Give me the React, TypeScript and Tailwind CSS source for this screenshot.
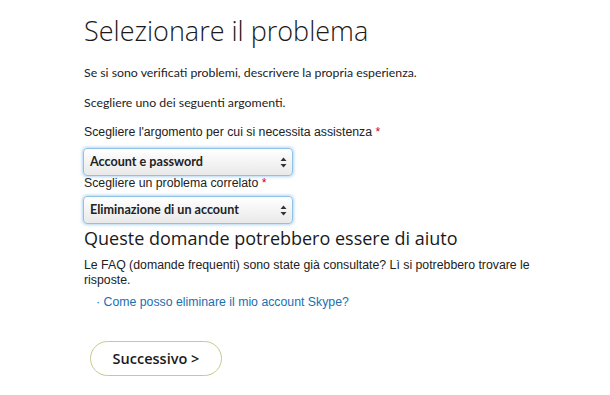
const segoe = "font-['Open_Sans',sans-serif]";
const lato = "font-['Lato',sans-serif]";
const arial = "font-['Liberation_Sans',Arial,sans-serif]";

function FakeSelect({ value }: { value: string }) {
  return (
    <div className="h-[28px] w-[210px] rounded-[4px] border border-[#8fc3e6] bg-gradient-to-b from-white to-[#e9e9e9] shadow-[0_0_3px_1px_rgba(120,180,230,0.55)] flex items-center justify-between pl-[6px] pr-[5px]">
      <span className={`${lato} text-[12.6px] font-bold text-[#222]`}>{value}</span>
      <svg width="7" height="11" viewBox="0 0 7 11">
        <path d="M3.5 0.5 L6.5 4 L0.5 4 Z" fill="#333" />
        <path d="M3.5 10.5 L6.5 7 L0.5 7 Z" fill="#333" />
      </svg>
    </div>
  );
}

export default function App() {
  return (
    <div className="w-[610px] h-[395px] bg-white overflow-hidden">
      <div className="pl-[84px] pt-[14px]">
        <h1 className={`${segoe} font-light text-[27px] leading-[34px] text-[#1a1a1a]`}>
          Selezionare il problema
        </h1>
        <p className={`${lato} text-[12.3px] leading-[16px] text-[#222] mt-[17px]`}>
          Se si sono verificati problemi, descrivere la propria esperienza.
        </p>
        <p className={`${lato} text-[12.3px] leading-[16px] text-[#222] mt-[14px]`}>
          Scegliere uno dei seguenti argomenti.
        </p>
        <p className={`${arial} text-[12.3px] leading-[16px] text-[#222] mt-[13px]`}>
          Scegliere l'argomento per cui si necessita assistenza{" "}
          <span className="text-[#d0021b]">*</span>
        </p>
        <div className="mt-[8px] -ml-px">
          <FakeSelect value="Account e password" />
        </div>
        <p className={`${arial} text-[12.3px] leading-[14px] text-[#222]`}>
          Scegliere un problema correlato <span className="text-[#d0021b]">*</span>
        </p>
        <div className="mt-[6px] -ml-px">
          <FakeSelect value="Eliminazione di un account" />
        </div>
        <h2 className={`${segoe} text-[18px] leading-[22px] text-[#1a1a1a] mt-[3px]`}>
          Queste domande potrebbero essere di aiuto
        </h2>
        <p className={`${arial} text-[12.3px] leading-[15px] text-[#222] mt-[9px] w-[450px]`}>
          Le FAQ (domande frequenti) sono state già consultate? Lì si potrebbero trovare le risposte.
        </p>
        <p className={`${arial} text-[12.3px] leading-[16px] text-[#1a6fb0] mt-[6px] pl-[12px]`}>
          · Come posso eliminare il mio account Skype?
        </p>
        <button
          className={`${segoe} mt-[31px] ml-[6px] h-[35px] w-[132px] rounded-full border border-[#c9c98f] bg-white text-[14.5px] font-semibold text-[#1a1a1a]`}
        >
          Successivo &gt;
        </button>
      </div>
    </div>
  );
}
